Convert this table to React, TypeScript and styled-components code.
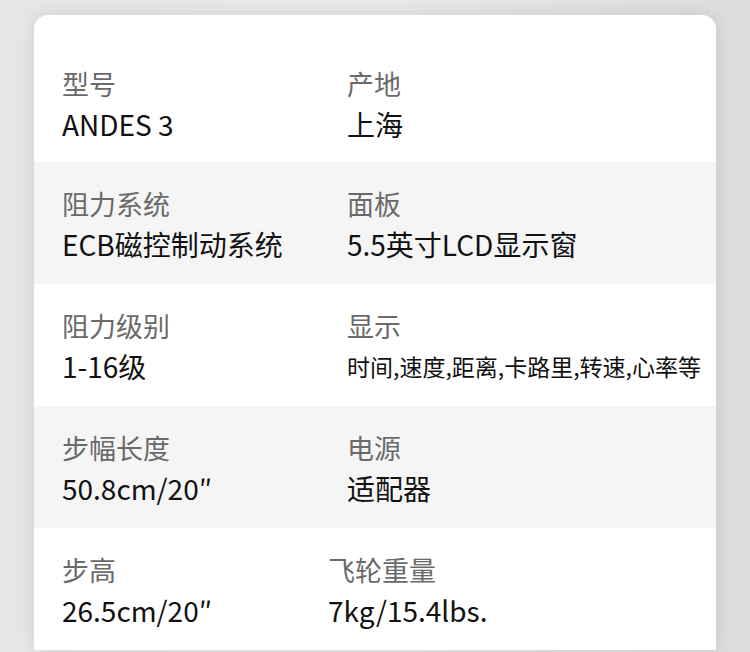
import styled, { createGlobalStyle } from 'styled-components';

const GlobalStyle = createGlobalStyle`
  html, body {
    margin: 0;
    padding: 0;
    background: #e4e4e4;
    font-family: "Noto Sans CJK SC", "Noto Sans", sans-serif;
  }
`;

const Page = styled.div`
  width: 750px;
  height: 652px;
  overflow: hidden;
  padding: 15px 34px 0 34px;
  box-sizing: border-box;
  background: linear-gradient(90deg, #e6e6e6 0%, #e9e9e9 50%, #dcdcdc 100%);
`;

const Card = styled.div`
  background: #ffffff;
  border-radius: 14px 14px 0 0;
  padding-top: 27px;
  box-shadow: 0 0 18px rgba(0, 0, 0, 0.1);
  overflow: hidden;
`;

const Row = styled.div<{ $shaded?: boolean }>`
  display: grid;
  grid-template-columns: 285px 1fr;
  padding: 22px 0 20px 28px;
  background: ${p => (p.$shaded ? '#f5f5f5' : '#ffffff')};

  &:first-child {
    padding-bottom: 18px;
  }
`;

const Cell = styled.div<{ $shift?: number }>`
  display: flex;
  flex-direction: column;
  margin-left: ${p => p.$shift ?? 0}px;
`;

const Label = styled.div`
  font-size: 27px;
  line-height: 40px;
  color: #6a6a6a;
`;

const Value = styled.div<{ $small?: boolean }>`
  font-size: ${p => (p.$small ? '23px' : '28px')};
  line-height: 40px;
  color: #111111;
  white-space: nowrap;
`;

type Spec = { label: string; value: string; small?: boolean; shift?: number };

const rows: [Spec, Spec][] = [
  [{ label: '型号', value: 'ANDES 3' }, { label: '产地', value: '上海' }],
  [{ label: '阻力系统', value: 'ECB磁控制动系统' }, { label: '面板', value: '5.5英寸LCD显示窗' }],
  [
    { label: '阻力级别', value: '1-16级' },
    { label: '显示', value: '时间,速度,距离,卡路里,转速,心率等', small: true },
  ],
  [{ label: '步幅长度', value: '50.8cm/20″' }, { label: '电源', value: '适配器' }],
  [{ label: '步高', value: '26.5cm/20″' }, { label: '飞轮重量', value: '7kg/15.4lbs.', shift: -19 }],
];

export default function App() {
  return (
    <>
      <GlobalStyle />
      <Page>
        <Card>
          {rows.map((pair, i) => (
            <Row key={i} $shaded={i % 2 === 1}>
              {pair.map((s, j) => (
                <Cell key={j} $shift={s.shift}>
                  <Label>{s.label}</Label>
                  <Value $small={s.small}>{s.value}</Value>
                </Cell>
              ))}
            </Row>
          ))}
        </Card>
      </Page>
    </>
  );
}
